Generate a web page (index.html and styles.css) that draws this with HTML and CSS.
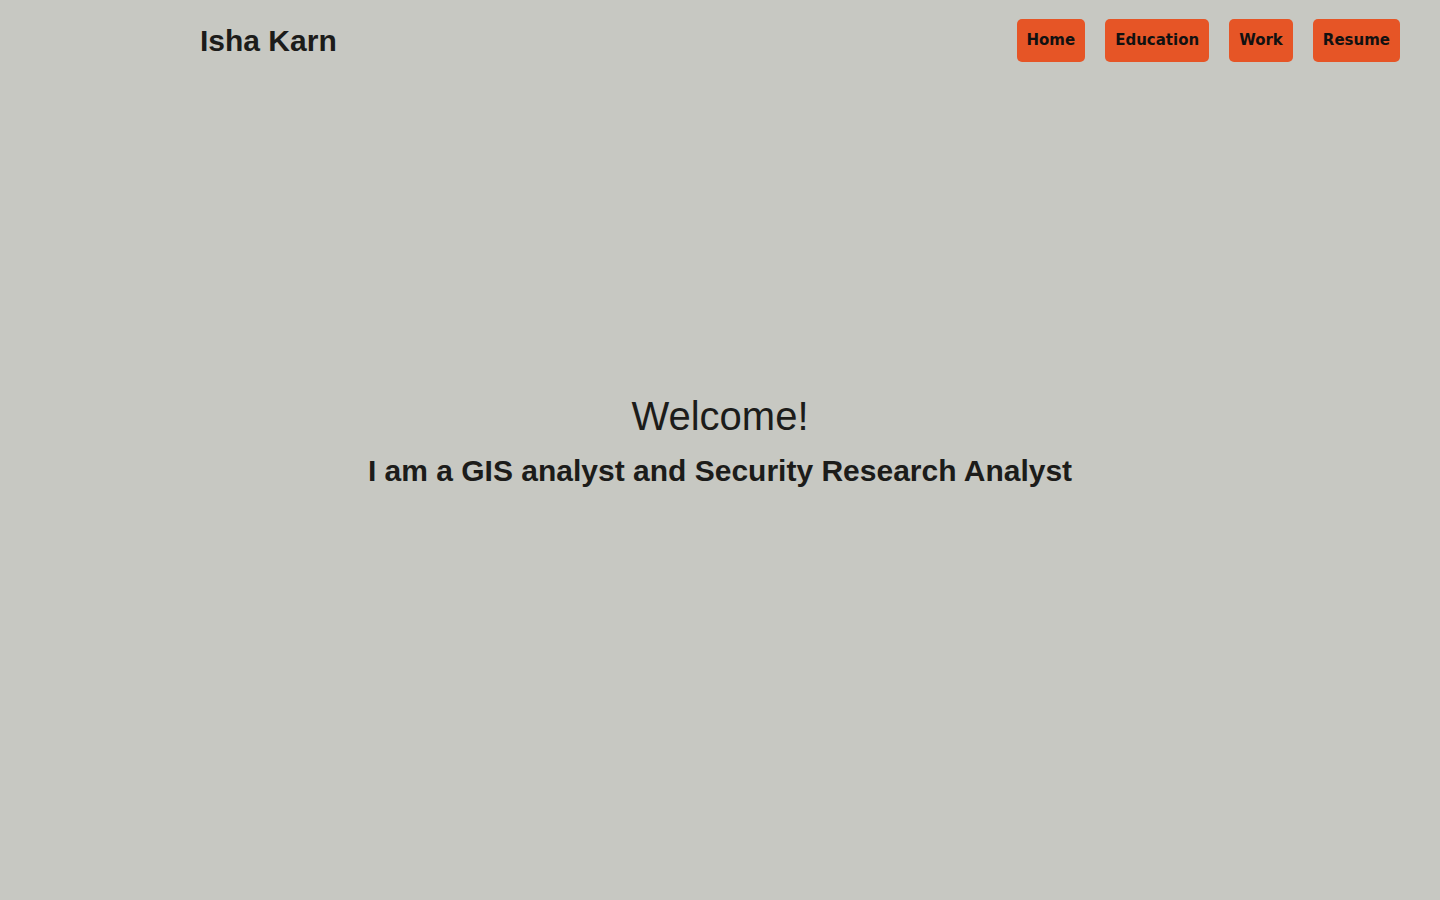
FILE: index.html
```html
<!DOCTYPE html>
<html lang="en">
<head>
<meta charset="utf-8">
<title>Isha Karn</title>
<link rel="stylesheet" href="styles.css">
</head>
<body>
<header class="topbar">
  <h1 class="name">Isha Karn</h1>
  <nav class="nav">
    <a class="nav-btn" href="#">Home</a>
    <a class="nav-btn" href="#">Education</a>
    <a class="nav-btn" href="#">Work</a>
    <a class="nav-btn" href="#">Resume</a>
  </nav>
</header>
<main class="hero">
  <h2 class="welcome">Welcome!</h2>
  <p class="tagline">I am a GIS analyst and Security Research Analyst</p>
</main>
</body>
</html>
```

FILE: styles.css
```css
html, body {
  margin: 0;
  padding: 0;
  height: 100%;
}
body {
  background: #c7c8c2;
  color: #1c1c1a;
  font-family: "Liberation Sans", Arial, sans-serif;
  display: flex;
  flex-direction: column;
}
.topbar {
  display: flex;
  justify-content: space-between;
  align-items: flex-start;
  padding: 19px 40px 0 200px;
  height: 62px;
  box-sizing: border-box;
}
.name {
  margin: 0;
  font-size: 30px;
  font-weight: bold;
  line-height: 43px;
}
.nav {
  display: flex;
  gap: 20px;
}
.nav-btn {
  display: block;
  background: #e65526;
  color: #111;
  text-decoration: none;
  font-family: "DejaVu Sans", sans-serif;
  font-weight: bold;
  font-size: 15px;
  line-height: 19px;
  padding: 12px 10px;
  border-radius: 5px;
}
.hero {
  display: flex;
  flex-direction: column;
  align-items: center;
  padding-top: 331px;
}
.welcome {
  margin: 0;
  font-size: 40px;
  font-weight: normal;
  line-height: 46px;
}
.tagline {
  margin: 14px 0 0;
  font-size: 30px;
  font-weight: bold;
  line-height: 35px;
}
```
